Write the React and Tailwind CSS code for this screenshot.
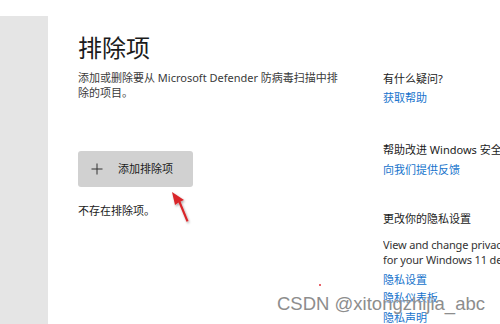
import React from "react";

const font = { fontFamily: '"Noto Sans", "Noto Sans CJK SC", sans-serif' };

export default function App() {
  return (
    <div
      className="relative w-[500px] h-[324px] overflow-hidden bg-white flex text-[#1b1b1b]"
      style={font}
    >
      <div className="w-[48px] mt-[16px] h-[308px] bg-[#e5e5e5] shrink-0" />
      <div className="w-[335px] shrink-0 pl-[30px] pt-[31px]">
        <div className="text-[24px] leading-[32px] font-['Noto_Sans_CJK_SC',sans-serif]">排除项</div>
        <div className="mt-[7px] text-[11px] leading-[15px] text-[#3a3a3a] whitespace-nowrap">
          <div>添加或删除要从 Microsoft Defender 防病毒扫描中排</div>
          <div>除的项目。</div>
        </div>
        <button className="mt-[51px] w-[115px] h-[36px] bg-[#d1d1d1] rounded-[3px] flex items-center pl-[13px] text-[11px] text-[#1b1b1b]">
          <svg width="12" height="12" viewBox="0 0 12 12" className="shrink-0">
            <path d="M6 0.5V11.5M0.5 6H11.5" stroke="#333" strokeWidth="1" />
          </svg>
          <span className="ml-[15px]">添加排除项</span>
        </button>
        <div className="mt-[16px] text-[11px] leading-[16px]">不存在排除项。</div>
      </div>
      <div className="flex-1 pt-[71px] text-[11px] whitespace-nowrap overflow-hidden">
        <div className="leading-[16px]">有什么疑问?</div>
        <div className="mt-[3px] leading-[16px] text-[#1673cc]">获取帮助</div>
        <div className="mt-[36px] leading-[16px]">帮助改进 Windows 安全中心</div>
        <div className="mt-[4px] leading-[16px] text-[#1673cc]">向我们提供反馈</div>
        <div className="mt-[33px] leading-[16px]">更改你的隐私设置</div>
        <div className="mt-[10px] leading-[15px] text-[#333] tracking-[-0.15px]">
          <div>View and change privacy settings</div>
          <div>for your Windows 11 device.</div>
        </div>
        <div className="mt-[5px] leading-[16px] text-[#1673cc]">隐私设置</div>
        <div className="mt-[2px] leading-[16px] text-[#1673cc]">隐私仪表板</div>
        <div className="mt-[4px] leading-[16px] text-[#1673cc]">隐私声明</div>
      </div>

      <svg
        className="absolute left-[164px] top-[186px]"
        width="32"
        height="42"
        viewBox="0 0 32 42"
      >
        <defs>
          <filter id="sh" x="-50%" y="-50%" width="200%" height="200%">
            <feDropShadow dx="1" dy="1.5" stdDeviation="1" floodColor="#000" floodOpacity="0.35" />
          </filter>
        </defs>
        <g filter="url(#sh)">
          <path d="M8 6 L20 14 L16.5 15.5 L24.5 35 L22.5 35.8 L14.5 16.5 L11 19 Z" fill="#d9262a" />
        </g>
      </svg>
      <div className="absolute left-[319px] top-[284px] w-[2px] h-[2px] bg-[#e0303a] rounded-full" />

      <div
        className="absolute left-[277px] top-[294.5px] text-[18.5px] leading-none text-[#8d8d8d] whitespace-nowrap font-['Liberation_Sans',sans-serif]"
        style={{ textShadow: "0 0 1px rgba(255,255,255,0.8)" }}
      >
        CSDN @xitongzhijia_abc
      </div>
    </div>
  );
}
